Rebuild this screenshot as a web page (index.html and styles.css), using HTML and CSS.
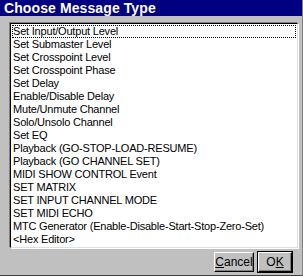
FILE: index.html
```html
<!DOCTYPE html>
<html lang="en">
<head>
  <meta charset="UTF-8" />
  <title>Choose Message Type</title>
  <link rel="stylesheet" href="styles.css">
</head>
<body>
  <div class="dialog">
    <div class="title-bar">Choose Message Type</div>

    <div class="dialog-body">
      <ul class="list-box">
        <li class="focused">Set Input/Output Level</li>
        <li>Set Submaster Level</li>
        <li>Set Crosspoint Level</li>
        <li>Set Crosspoint Phase</li>
        <li>Set Delay</li>
        <li>Enable/Disable Delay</li>
        <li>Mute/Unmute Channel</li>
        <li>Solo/Unsolo Channel</li>
        <li>Set EQ</li>
        <li>Playback (GO-STOP-LOAD-RESUME)</li>
        <li>Playback (GO CHANNEL SET)</li>
        <li>MIDI SHOW CONTROL Event</li>
        <li>SET MATRIX</li>
        <li>SET INPUT CHANNEL MODE</li>
        <li>SET MIDI ECHO</li>
        <li>MTC Generator (Enable-Disable-Start-Stop-Zero-Set)</li>
        <li>&lt;Hex Editor&gt;</li>
      </ul>

      <div class="button-row">
        <button class="btn"><u>C</u>ancel</button>
        <button class="btn default">O<u>K</u></button>
      </div>
    </div>
  </div>
</body>
</html>
```

FILE: styles.css
```css
body {
  margin: 0;
  background: #c0c0c0;
  font-family: "Liberation Sans", Arial, sans-serif;
}

.dialog {
  width: 303px;
  height: 276px;
  box-sizing: border-box;
  background: #c0c0c0;
  border-right: 1px solid #808080;
  border-bottom: 1px solid #404040;
}

.title-bar {
  height: 16px;
  line-height: 16px;
  background: #000080;
  color: #fff;
  font-weight: bold;
  font-size: 14px;
  letter-spacing: 0.1px;
  padding-left: 4px;
}

.dialog-body {
  padding: 7px 4px 0 10px;
}

.list-box {
  list-style: none;
  margin: 0;
  padding: 1px 1px 2px 1px;
  height: 225px;
  box-sizing: border-box;
  background: #fff;
  border-top: 1px solid #000;
  border-left: 1px solid #000;
  border-right: 1px solid #dfdfdf;
  border-bottom: 1px solid #dfdfdf;
  box-shadow: -1px -1px 0 #808080, 1px 1px 0 #fff;
  font-size: 11px;
  letter-spacing: -0.2px;
  color: #000;
}

.list-box li {
  height: 13px;
  line-height: 13px;
  padding-left: 1px;
  white-space: nowrap;
}

.list-box li.focused {
  outline: 1px dotted #000;
  outline-offset: -1px;
}

.button-row {
  display: flex;
  justify-content: flex-end;
  gap: 4px;
  padding: 4px 6px 0 0;
}

.btn {
  height: 20px;
  padding: 0;
  background: #c0c0c0;
  font-family: "Liberation Sans", Arial, sans-serif;
  font-size: 12px;
  color: #000;
  border-top: 1px solid #fff;
  border-left: 1px solid #fff;
  border-right: 1px solid #000;
  border-bottom: 1px solid #000;
  box-shadow: inset -1px -1px 0 #808080;
  width: 40px;
}

.btn.default {
  width: 34px;
  outline: 1px solid #000;
}
```
